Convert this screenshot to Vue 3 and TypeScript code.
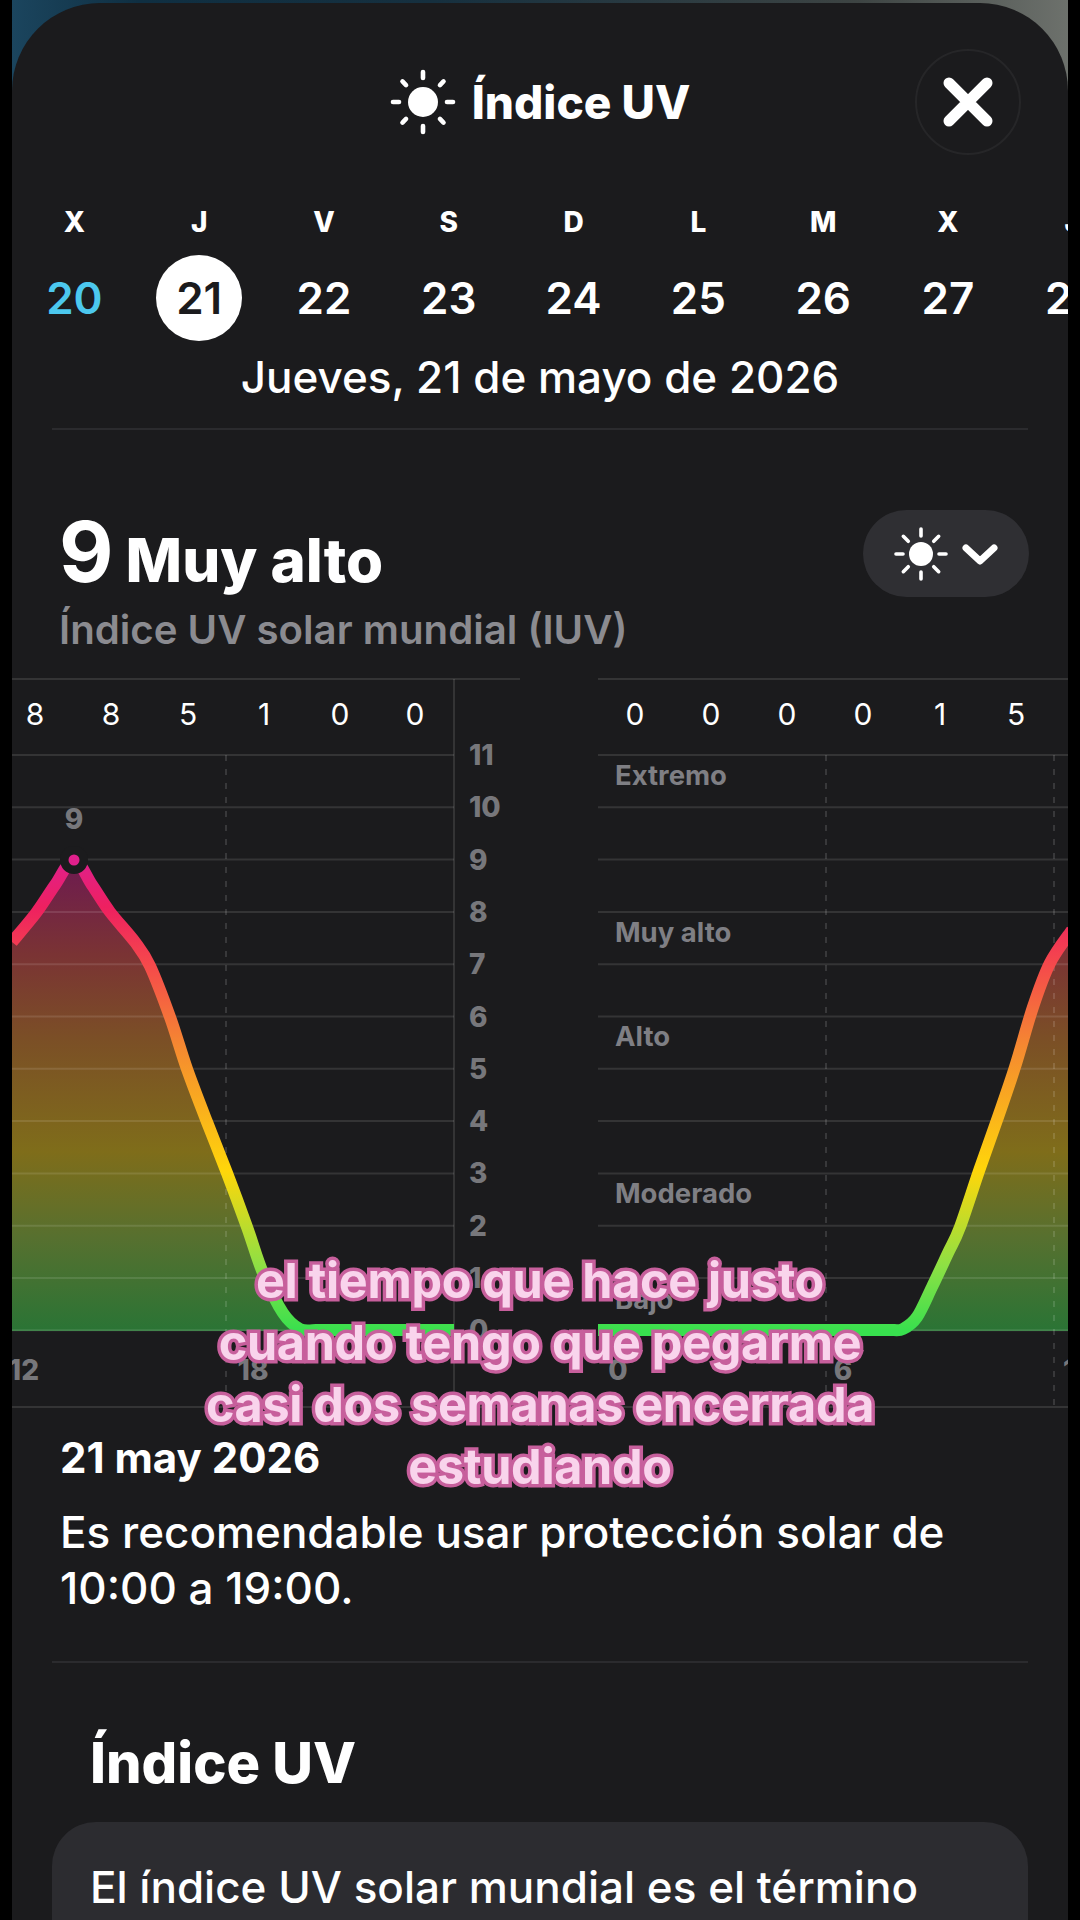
<script setup lang="ts">
const weekDays = ['X', 'J', 'V', 'S', 'D', 'L', 'M', 'X', 'J']
const dayNums = [20, 21, 22, 23, 24, 25, 26, 27, 28]
const rayAngles = [0, 45, 90, 135, 180, 225, 270, 315]

// posiciones del grafico en px de pagina (el viewBox del svg empieza en 12,676)
const gridYs = Array.from({ length: 12 }, (_, i) => 755 + i * 52.3)
const leftHours = [
  { x: 35, v: 8 }, { x: 111, v: 8 }, { x: 188, v: 5 }, { x: 264, v: 1 }, { x: 340, v: 0 }, { x: 415, v: 0 },
]
const rightHours = [
  { x: 635, v: 0 }, { x: 711, v: 0 }, { x: 787, v: 0 }, { x: 863, v: 0 }, { x: 940, v: 1 }, { x: 1016, v: 5 },
]
const levels = [
  { y: 776, t: 'Extremo' }, { y: 933, t: 'Muy alto' }, { y: 1037, t: 'Alto' }, { y: 1194, t: 'Moderado' }, { y: 1300, t: 'Bajo' },
]
const hourMarks = [
  { x: 39, a: 'end', t: '12' }, { x: 253, a: 'middle', t: '18' }, { x: 618, a: 'middle', t: '0' },
  { x: 843, a: 'middle', t: '6' }, { x: 1063, a: 'start', t: '12' },
]

type Pt = [number, number]

// curva suave (catmull-rom) a partir de los puntos medidos
const smooth = (pts: Pt[]) => {
  let d = `M${pts[0][0]} ${pts[0][1]}`
  for (let i = 0; i < pts.length - 1; i++) {
    const p0 = pts[i - 1] ?? pts[i]
    const p1 = pts[i]
    const p2 = pts[i + 1]
    const p3 = pts[i + 2] ?? p2
    const c1x = p1[0] + (p2[0] - p0[0]) / 6
    const c1y = p1[1] + (p2[1] - p0[1]) / 6
    const c2x = p2[0] - (p3[0] - p1[0]) / 6
    const c2y = p2[1] - (p3[1] - p1[1]) / 6
    d += ` C${c1x.toFixed(1)} ${c1y.toFixed(1)} ${c2x.toFixed(1)} ${c2y.toFixed(1)} ${p2[0]} ${p2[1]}`
  }
  return d
}

const leftPts: Pt[] = [
  [12, 942], [36, 913], [55, 885], [74, 860], [92, 885], [110, 912], [135, 942], [150, 966], [170, 1017],
  [187, 1069], [207, 1122], [227, 1173], [247, 1227], [263, 1273], [283, 1313], [300, 1329], [316, 1330],
]
const rightPts: Pt[] = [
  [892, 1330], [903, 1329], [917, 1317], [932, 1287], [948, 1253], [960, 1227], [980, 1168], [997, 1120],
  [1015, 1067], [1033, 1007], [1050, 963], [1072, 930],
]
const leftCurve = `${smooth(leftPts)} L454 1330`
const rightCurve = `M598 1330 L892 1330 ${smooth(rightPts).replace(/^M\S+ \S+/, '')}`
const leftFill = `${smooth(leftPts)} L316 1331 L12 1331 Z`
const rightFill = `${smooth(rightPts)} L1072 1331 L892 1331 Z`
</script>

<template>
  <div class="screen">
    <div class="wallpaper">
      <div class="sheet">
        <header class="topbar">
          <span></span>
          <div class="title">
            <svg class="title-sun" width="66" height="66" viewBox="-33 -33 66 66">
              <circle r="15" fill="#fff" />
              <line
                v-for="a in rayAngles"
                :key="a"
                x1="0"
                y1="-24"
                x2="0"
                :y2="a % 90 === 0 ? -30 : -29"
                stroke="#fff"
                stroke-width="4.6"
                stroke-linecap="round"
                :transform="`rotate(${a})`"
              />
            </svg>
            <span>Índice UV</span>
          </div>
          <button class="close">
            <svg width="50" height="50" viewBox="0 0 50 50">
              <path d="M6 6 L44 44 M44 6 L6 44" stroke="#fff" stroke-width="11" stroke-linecap="round" />
            </svg>
          </button>
        </header>

        <div class="week">
          <span v-for="(d, i) in weekDays" :key="i" class="wd">{{ d }}</span>
          <div v-for="(n, i) in dayNums" :key="n" class="day" :class="{ past: i === 0, on: i === 1 }">
            <span>{{ n }}</span>
          </div>
        </div>
        <p class="date">Jueves, 21 de mayo de 2026</p>
        <div class="divider"></div>

        <section class="summary">
          <div>
            <div class="score"><span class="num">9</span><span class="lvl">Muy alto</span></div>
            <p class="sub">Índice UV solar mundial (IUV)</p>
          </div>
          <div class="pill">
            <svg width="54" height="54" viewBox="-27 -27 54 54">
              <circle r="12" fill="#fff" />
              <line
                v-for="a in rayAngles"
                :key="a"
                x1="0"
                y1="-18"
                x2="0"
                y2="-25"
                stroke="#fff"
                stroke-width="3.6"
                stroke-linecap="round"
                :transform="`rotate(${a})`"
              />
            </svg>
            <svg width="36" height="24" viewBox="0 0 36 24">
              <path d="M4 6 L18 19 L32 6" fill="none" stroke="#fff" stroke-width="7" stroke-linecap="round" stroke-linejoin="round" />
            </svg>
          </div>
        </section>

        <svg class="chart" width="1056" height="736" viewBox="12 676 1056 736">
          <defs>
            <linearGradient id="uvFill" gradientUnits="userSpaceOnUse" x1="0" y1="860" x2="0" y2="1331">
              <stop offset="0" stop-color="#6d1a50" />
              <stop offset="0.2" stop-color="#7a3334" />
              <stop offset="0.38" stop-color="#7b4f26" />
              <stop offset="0.62" stop-color="#7f6d1a" />
              <stop offset="0.8" stop-color="#57702f" />
              <stop offset="1" stop-color="#2a7435" />
            </linearGradient>
            <linearGradient id="uvLine" gradientUnits="userSpaceOnUse" x1="0" y1="860" x2="0" y2="1331">
              <stop offset="0" stop-color="#e0208c" />
              <stop offset="0.1" stop-color="#ee2060" />
              <stop offset="0.22" stop-color="#f5484c" />
              <stop offset="0.4" stop-color="#f58a30" />
              <stop offset="0.66" stop-color="#ffd60a" />
              <stop offset="0.86" stop-color="#8ee044" />
              <stop offset="1" stop-color="#38e04e" />
            </linearGradient>
          </defs>

          <path :d="leftFill" fill="url(#uvFill)" />
          <path :d="rightFill" fill="url(#uvFill)" />

          <!-- rejilla -->
          <g stroke="#fff" stroke-opacity="0.11" stroke-width="2">
            <line x1="12" y1="679" x2="520" y2="679" />
            <line x1="598" y1="679" x2="1068" y2="679" />
            <template v-for="y in gridYs" :key="y">
              <line x1="12" :y1="y" x2="454" :y2="y" />
              <line x1="598" :y1="y" x2="1068" :y2="y" />
            </template>
            <line x1="12" y1="1407" x2="520" y2="1407" />
            <line x1="598" y1="1407" x2="1068" y2="1407" />
            <line x1="454" y1="679" x2="454" y2="1407" />
          </g>
          <g stroke="#fff" stroke-opacity="0.13" stroke-width="2" stroke-dasharray="6 8">
            <line x1="226" y1="755" x2="226" y2="1405" />
            <line x1="826" y1="755" x2="826" y2="1405" />
            <line x1="1054" y1="755" x2="1054" y2="1405" />
          </g>

          <path :d="leftCurve" fill="none" stroke="url(#uvLine)" stroke-width="12" stroke-linejoin="round" />
          <path :d="rightCurve" fill="none" stroke="url(#uvLine)" stroke-width="12" stroke-linejoin="round" />
          <circle cx="74" cy="860" r="14" fill="#1b1b1d" />
          <circle cx="74" cy="860" r="5.5" fill="#e0208c" />
          <text class="tick" x="74" y="829" text-anchor="middle">9</text>

          <text v-for="h in leftHours" :key="'l' + h.x" class="hour" :x="h.x" y="725" text-anchor="middle">{{ h.v }}</text>
          <text v-for="h in rightHours" :key="'r' + h.x" class="hour" :x="h.x" y="725" text-anchor="middle">{{ h.v }}</text>
          <text v-for="(y, i) in gridYs" :key="'n' + i" class="tick" x="469" :y="y + 10">{{ 11 - i }}</text>
          <text v-for="l in levels" :key="l.t" class="level" x="615" :y="l.y + 9">{{ l.t }}</text>
          <text v-for="m in hourMarks" :key="m.x" class="tick" :x="m.x" y="1380" :text-anchor="m.a">{{ m.t }}</text>
        </svg>

        <h3 class="day-title">21 may 2026</h3>
        <p class="body-text">Es recomendable usar protección solar de<br />10:00 a 19:00.</p>
        <div class="divider"></div>

        <h2 class="about">Índice UV</h2>
        <div class="info">El índice UV solar mundial es el término</div>
      </div>
    </div>

    <div class="caption">
      <div>el tiempo que hace justo</div>
      <div>cuando tengo que pegarme</div>
      <div>casi dos semanas encerrada</div>
      <div>estudiando</div>
    </div>
  </div>
</template>

<style scoped>
.screen {
  position: relative;
  width: 1080px;
  height: 1920px;
  padding: 0 12px;
  box-sizing: border-box;
  overflow: hidden;
  background: #000;
  font-family: Inter, "Liberation Sans", sans-serif;
  color: #fff;
}
.wallpaper {
  height: 1920px;
  padding-top: 3px;
  box-sizing: border-box;
  background: linear-gradient(90deg, #1b455e 0%, #0f2f42 12%, #16303f 40%, #3d4443 80%, #6d716c 100%);
}
.sheet {
  height: 1917px;
  overflow: hidden;
  border-radius: 88px 88px 0 0;
  background: #1b1b1d;
}
.topbar {
  display: grid;
  grid-template-columns: 1fr auto 1fr;
  align-items: center;
  height: 152px;
  padding: 46px 47px 0;
  box-sizing: border-box;
}
.title {
  display: flex;
  align-items: center;
  gap: 16px;
  font-size: 46px;
  font-weight: 800;
}
.title-sun {
  display: block;
}
.close {
  justify-self: end;
  display: flex;
  align-items: center;
  justify-content: center;
  width: 106px;
  height: 106px;
  padding: 0;
  border: 2px solid #262628;
  border-radius: 50%;
  background: none;
}
.week {
  display: grid;
  grid-template-columns: repeat(9, 124.8px);
  row-gap: 16px;
  padding-top: 50px;
  overflow: hidden;
}
.wd {
  height: 34px;
  line-height: 34px;
  text-align: center;
  font-size: 28px;
  font-weight: 800;
}
.day {
  display: flex;
  align-items: center;
  justify-content: center;
  height: 86px;
  font-size: 44px;
  font-weight: 600;
}
.day.past {
  color: #4cc8ee;
}
.day.on span {
  display: flex;
  align-items: center;
  justify-content: center;
  width: 86px;
  height: 86px;
  border-radius: 50%;
  background: #fff;
  color: #1b1b1d;
}
.date {
  margin: 0;
  padding: 11px 0 26px;
  text-align: center;
  font-size: 44px;
  line-height: 50px;
  font-weight: 500;
}
.divider {
  height: 2px;
  margin: 0 40px;
  background: #2b2b2e;
}
.summary {
  display: flex;
  justify-content: space-between;
  align-items: flex-start;
  padding: 80px 39px 23px 47px;
}
.score {
  display: flex;
  align-items: baseline;
  gap: 12px;
  height: 97px;
}
.num {
  font-size: 84px;
  line-height: 84px;
  font-weight: 700;
}
.lvl {
  font-size: 60px;
  line-height: 84px;
  font-weight: 800;
}
.sub {
  margin: 0;
  font-size: 40.2px;
  line-height: 46px;
  font-weight: 600;
  color: #8b8b90;
}
.pill {
  display: flex;
  align-items: center;
  justify-content: center;
  gap: 14px;
  width: 166px;
  height: 87px;
  border-radius: 44px;
  background: #2f2f33;
}
.chart {
  display: block;
}
.hour {
  font-size: 30px;
  fill: #fff;
}
.tick {
  font-size: 28px;
  font-weight: 800;
  fill: #77777b;
}
.level {
  font-size: 27.5px;
  font-weight: 700;
  fill: #7f7f84;
}
.day-title {
  margin: 0;
  padding: 24px 48px 0;
  font-size: 42px;
  line-height: 44px;
  font-weight: 700;
}
.body-text {
  margin: 0;
  padding: 24px 48px 45px;
  font-size: 44px;
  line-height: 56px;
  font-weight: 500;
}
.about {
  margin: 0;
  padding: 68px 78px 27px;
  font-size: 56px;
  line-height: 64px;
  font-weight: 800;
}
.info {
  margin: 0 40px;
  padding: 37px 38px 60px;
  border-radius: 44px 44px 0 0;
  background: #2c2c30;
  font-size: 44px;
  line-height: 56px;
  font-weight: 500;
}
.caption {
  position: absolute;
  top: 1250px;
  left: 0;
  width: 1080px;
  text-align: center;
  font-size: 48.5px;
  line-height: 62px;
  font-weight: 700;
  letter-spacing: -0.3px;
  color: #f9d4ec;
  -webkit-text-stroke: 7px #c75f9c;
  paint-order: stroke fill;
}
</style>

<style>
html, body {
  margin: 0;
  background: #000;
}
</style>
